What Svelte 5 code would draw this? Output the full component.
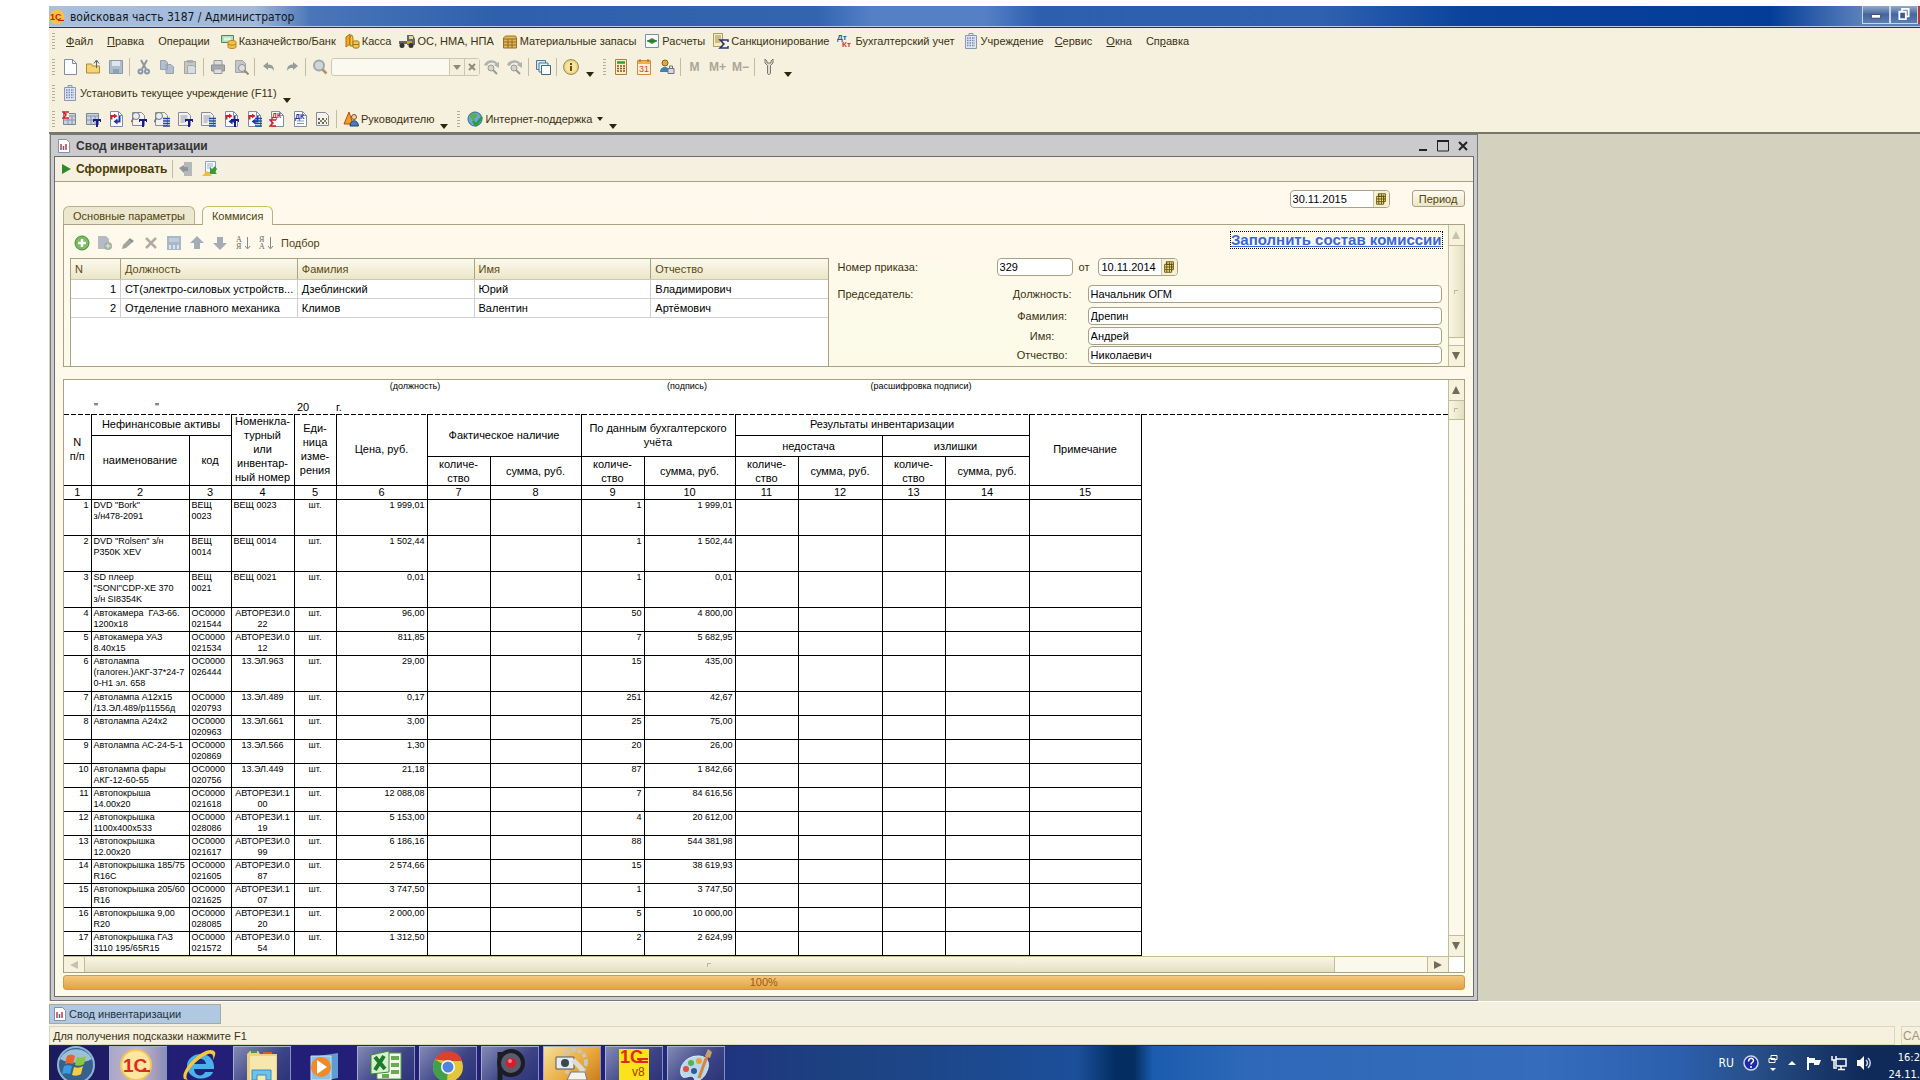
<script>
  const page = '<path d="M2.500 .5h8l4 4v11h-12z" fill="#fff" stroke="#7d8fa8"/><path d="M10.500 .5v4h4" fill="none" stroke="#7d8fa8"/>';
  const grayPage = '<path d="M1.500 1.500h9l3 3v10h-12z" fill="#f4f2ec" stroke="#8a8a92"/>';
  const lines = '<path d="M3.500 5h7M3.500 7h7M3.500 9h7M3.500 11h4" stroke="#9a9aa8"/>';
  const blueT = '<path d="M8 8h8v3h-1v-1h-2v6h-2v-6H9v1H8z" fill="#1a1a8c"/>';
  const blueList = '<path d="M9 7.500h7M9 10h7M9 12.500h7M9 15h7" stroke="#1c4aa8" stroke-width="1.500"/>';
  const sheet = '<path d="M1.500 2.500h12v11h-12z" fill="#c9d4e0" stroke="#7b8794"/><path d="M2 5h11M6 5v8M10 5v8M2 9h11" stroke="#8494a8"/>';
  const swirl = '<path d="M3.500 8.500V5H7" fill="none" stroke="#d02030" stroke-width="2"/><path d="M6 2.500L9.500 5 6 7.500z" fill="#d02030"/><path d="M11.500 5v5.500H9" fill="none" stroke="#2030b0" stroke-width="2"/><path d="M9.500 7.500v6L5.500 10.500z" fill="#2030b0"/>';
  const lens = '<circle cx="5" cy="5" r="3.500" fill="#e8eef2" stroke="#777"/><path d="M2.500 7.500L0 11" stroke="#777" stroke-width="1.500"/>';

  const icons = {
    new: page,
    open: '<path d="M1.500 5h5l1 2h7v7h-13z" fill="#f4d478" stroke="#b08a2c"/><path d="M11.500 9V2M9 4.500L11.500 1 14 4.500" fill="none" stroke="#4a6a7a"/>',
    save: '<path d="M1.500 1.500h13v13h-13z" fill="#aebdcb" stroke="#8a9aac"/><path d="M4 2h8v5H4z" fill="#dfe5ea"/><path d="M5 10h6v4H5z" fill="#8fa0b4"/>',
    cut: '<path d="M5 1l5 9M11 1L6 10" stroke="#8d979f" stroke-width="2"/><circle cx="4.500" cy="12.500" r="2" fill="none" stroke="#8798ac" stroke-width="2"/><circle cx="11" cy="12.500" r="2" fill="none" stroke="#8798ac" stroke-width="2"/>',
    copy: '<path d="M1.500 1.500h5l2 2v7h-7zM7 5.500h5l2.500 2.500v6.500H7z" fill="#b4bfce" stroke="#95a2b4"/>',
    paste: '<path d="M2.500 2.500h11v12h-11z" fill="#c9c7bf" stroke="#a5a49c"/><path d="M5 1h6v3H5z" fill="#a9adb2"/><path d="M5.500 6.500h6l2 2v6h-8z" fill="#d8dde2" stroke="#a0a8b2"/>',
    print: '<path d="M4 1.500h8v5H4z" fill="#dcdcdc" stroke="#999"/><path d="M1.500 6h13v6h-13z" fill="#a6a9ad" stroke="#8c8f94"/><path d="M4 10h8v4.500H4z" fill="#ddd" stroke="#999"/>',
    preview: '<path d="M2.500 1.500h7l3 3v9h-10z" fill="#c4c6ca" stroke="#a2a5aa"/><circle cx="9" cy="9" r="3.500" fill="#dde1e4" stroke="#8b9096"/><path d="M11.500 11.500l4 4" stroke="#9a8c6a" stroke-width="2"/>',
    undo: '<path d="M2 7l5-4v2.500c4 0 6 2 6 6.500-1-2.500-3-3-6-3V11z" fill="#949e97"/>',
    redo: '<path d="M14 7L9 3v2.500c-4 0-6 2-6 6.500 1-2.500 3-3 6-3V11z" fill="#949e97"/>',
    search: '<circle cx="7" cy="6.500" r="5" fill="#ccd7dc" stroke="#a3a7a8" stroke-width="2"/><path d="M10.500 10.500l4 4" stroke="#b4916c" stroke-width="2.500"/>',
    findNext: '<path d="M0 6C2 0 11 0 13 4l2-1v6l-5-3 1.500-1C9 3 4 3 3 7z" fill="#aeb2b0"/><circle cx="7" cy="9" r="3" fill="#d4d4ce" stroke="#999"/><path d="M9 11l4 4" stroke="#999" stroke-width="2"/>',
    windows: '<path d="M1.500 1.500h9v9h-9z" fill="#d6e6ee" stroke="#4d7a94"/><path d="M4 4h9v9H4z" fill="#e8f2f6" stroke="#4d7a94"/><path d="M6.500 6.500h9v9h-9z" fill="#fff" stroke="#3c6a88"/>',
    info: '<circle cx="8" cy="8" r="7.500" fill="#ecd27c" stroke="#9a8a60"/><circle cx="8" cy="8" r="5.500" fill="#f6e69a"/><path d="M8 7v5M8 4v2" stroke="#5a5020" stroke-width="2"/>',
    calc: '<path d="M2.500 .5h11v15h-11z" fill="#fff0c0" stroke="#ad7c3c"/><path d="M4 3.500h8" stroke="#2e9a4c" stroke-width="2.500"/><path d="M4 7h8M4 9.500h8M4 12h8" stroke="#8a4a2c" stroke-width="1.500" stroke-dasharray="2 1"/>',
    calendar: '<path d="M1.500 1.500h13v14h-13z" fill="#fff0d8" stroke="#cf8b3c"/><path d="M2 2h12v3H2z" fill="#f2b048"/><path d="M4 0v3M12 0v3" stroke="#996020"/><text x="3" y="13" font-size="9" fill="#e03c18" font-family="Liberation Sans">31</text>',
    userLock: '<circle cx="6" cy="4" r="3" fill="#e2a83c" stroke="#8a5a20"/><path d="M1 13c0-6 9-7 10 0z" fill="#3c80b8"/><path d="M9 9.500h6v5H9z" fill="#d6dae0" stroke="#6a7380"/><path d="M10.500 9V7h3v2" fill="none" stroke="#6a7380"/>',
    wrench: '<path d="M4 0v4l2.500 2.500V14c0 2 3 2 3 0V6.500L12 4V0l-2 2v2H6V2z" fill="#deded8" stroke="#787868"/>',
    building: '<path d="M2.500 2.500h11v13h-11zM6 .5h4v2H6z" fill="#dfe7f4" stroke="#8a96b4"/><path d="M4 5h8M4 7.500h8M4 10h8M4 12.500h8" stroke="#7686b0" stroke-width="1.500" stroke-dasharray="1.500 1"/>',
    bank: '<path d="M.5 2.500h12v7H.5z" fill="#b6dcbc" stroke="#4a8a5c"/><path d="M3 4.500h7v3H3z" fill="#e0f2e0"/><path d="M7 9c0-2 8-2 8 0v5c0 2-8 2-8 0z" fill="#f2c240" stroke="#b58620"/><path d="M7 11c2 1.500 6 1.500 8 0" fill="none" stroke="#b58620"/>',
    cash: '<path d="M2 4l4-3v10l-4 3z" fill="#f2a820" stroke="#b86c10"/><path d="M7 2c2 0 2 3 2 5v6H6V5z" fill="#f4c840" stroke="#a87414"/><path d="M9 9c0-1.500 6-1.500 6 0v5c0 1.500-6 1.500-6 0z" fill="#f0c850" stroke="#a87414"/><path d="M9 11.500h6" stroke="#a87414"/>',
    truck: '<path d="M0 8h8v3H0zM8 2h6l2 4v6H8z" fill="#5e6a6c"/><path d="M10 3h4v3h-4z" fill="#e8d890"/><path d="M8 8h5v3H8z" fill="#d89a20"/><circle cx="3" cy="12.500" r="2.500" fill="#333"/><circle cx="12" cy="12.500" r="2.500" fill="#333"/>',
    box: '<path d="M1.500 5l2-2h10l1 2v10h-13z" fill="#e8b850" stroke="#96702c"/><path d="M2 6h12M2 9h12M2 12h12M6 6v9M10 6v9" stroke="#8c6c2c"/>',
    calcs: '<path d="M1.500 1.500h13v13h-13z" fill="#f6fafc" stroke="#7890a8"/><path d="M3 8l5-3 5 3-5 3z" fill="#3c8c3c"/><path d="M3 8h10" stroke="#24682c"/>',
    sanction: '<path d="M.5 .5h9v13h-9z" fill="#f8eebc" stroke="#a89c60"/><path d="M2 3h6M2 5h6M2 7h5M2 9h5" stroke="#a08c50"/><path d="M15 9V7H7l4 4-4 4h8v-2" fill="none" stroke="#23337a" stroke-width="1.500"/>',
    dtkt: '<text x="0" y="7" font-size="8" font-weight="bold" fill="#2060a0" font-family="Liberation Sans">Дт</text><text x="5" y="14" font-size="8" font-weight="bold" fill="#d03828" font-family="Liberation Sans">Кт</text>',
    r1: sheet + '<path d="M7 .5v7H0z" fill="#f6f0df"/><path d="M7 1H1l3 3-3 3h6" fill="none" stroke="#d02030" stroke-width="1.500"/>',
    r2: sheet + blueT,
    r3: page + swirl,
    r4: grayPage + lens + blueT,
    r5: grayPage + lens + blueList,
    r6: grayPage + lines + blueT,
    r7: grayPage + lines + blueList,
    r8: page + swirl + blueT,
    r9: page + swirl + blueList,
    r10: page + '<text x="3" y="7" font-size="7" font-weight="bold" fill="#c02030" font-family="Liberation Sans">ДК</text><path d="M7 9H1l3 3-3 3h6" fill="none" stroke="#d02030" stroke-width="1.500"/>',
    r11: page + '<text x="3" y="8" font-size="7" font-weight="bold" fill="#2030a0" font-family="Liberation Sans">ДК</text><path d="M5 10h7M5 12.500h7" stroke="#8a96a8"/>',
    r12: grayPage + '<path d="M3 8h9M3 12h9" stroke="#666" stroke-width="2" stroke-dasharray="2 2"/><path d="M5 10h8" stroke="#8a8048" stroke-width="2" stroke-dasharray="2 2"/>',
    manager: '<path d="M1 13L6 1l4 12z" fill="#f0a020" stroke="#c04818"/><circle cx="11" cy="6" r="2.500" fill="#f0d0a0" stroke="#805020"/><path d="M7 15c0-7 8-7 8.500 0z" fill="#4a7ab8" stroke="#24406c"/>',
    globe: '<circle cx="8" cy="8" r="7" fill="#68a8d8" stroke="#35688c"/><path d="M3 4c3-3 6-2 7 0s-3 3-3 5-4-1-4-5z" fill="#58b050"/><path d="M6 10l3 4 6-8" fill="none" stroke="#2c9c30" stroke-width="2.500"/>',
    report: '<path d="M2.500 1.500h8l3 3v10h-11z" fill="#fff" stroke="#7f93ad"/><path d="M5 12V6" stroke="#c23b3b" stroke-width="1.500"/><path d="M7.500 12V8" stroke="#3d6bb0" stroke-width="1.500"/><path d="M10 12V6" stroke="#c23b3b" stroke-width="1.500"/>',
    restore: '<path d="M5 1h8v14H5z" fill="#b5b8ba"/><path d="M0 7l5-3v2h4v4H5v2z" fill="#8f9698"/>',
    loadSet: '<path d="M3.500 .5h10v11h-10z" fill="#f6f8fc" stroke="#8ba0c4"/><path d="M5 3h6M5 5h6M5 7h4" stroke="#9ab0d4"/><path d="M15 13H8V6l2 2 3-3 2 3-2 3z" fill="#3b9a35"/><path d="M0 15l5-5 5 5z" fill="#f2bc34"/>',
    add: '<circle cx="8" cy="8" r="7" fill="#7cbc60" stroke="#4c8a44"/><path d="M8 4v8M4 8h8" stroke="#fff" stroke-width="2.500"/>',
    addCopy: '<path d="M1 1h8l3 3v10H1z" fill="#b4bbc4"/><circle cx="11" cy="11" r="4" fill="#a3b0a0"/><path d="M11 8.500v5M8.500 11h5" stroke="#e8ece8"/>',
    edit: '<path d="M2 14l1-4 7-7 4 3-8 7z" fill="#9ea59c"/><path d="M9 4l4 3" stroke="#78807a"/>',
    remove: '<path d="M3 3l10 10M13 3L3 13" stroke="#b3aaa4" stroke-width="2.500"/>',
    saveRow: '<path d="M1 1h14v14H1z" fill="#a8b8ca"/><path d="M3 3h10v4H3z" fill="#bfcdda"/><path d="M3 10h2v4H3zM7 10h2v4H7zM11 10h2v4h-2z" fill="#dce4ec"/>',
    up: '<path d="M8 1l7 7h-4v6H5V8H1z" fill="#a4adb6"/>',
    downRow: '<path d="M8 15l7-7h-4V2H5v6H1z" fill="#a4adb6"/>',
    sortAZ: '<text x="1" y="7" font-size="8" fill="#666" font-family="Liberation Serif">А</text><text x="1" y="14" font-size="8" fill="#666" font-family="Liberation Serif">Я</text><path d="M12.500 2v11M10 11l2.500 3 2.500-3" fill="none" stroke="#888"/>',
    sortZA: '<text x="1" y="7" font-size="8" fill="#666" font-family="Liberation Serif">Я</text><text x="1" y="14" font-size="8" fill="#666" font-family="Liberation Serif">А</text><path d="M12.500 2v11M10 11l2.500 3 2.500-3" fill="none" stroke="#888"/>',
    pick: '<path d="M5 2h8v9H5z" fill="#f6e48c" stroke="#5c4e08"/><path d="M3 5h8v9H3z" fill="#f6e48c" stroke="#5c4e08"/><path d="M3 8h10M3 11h8M5 5h8M5.500 2v12M8.500 2v12M11 3v9" stroke="#5c4e08"/>',
  };

  const menu = [
    { text: "Файл", key: 0 },
    { text: "Правка", key: 0 },
    { text: "Операции" },
    { text: "Казначейство/Банк", icon: "bank" },
    { text: "Касса", icon: "cash" },
    { text: "ОС, НМА, НПА", icon: "truck" },
    { text: "Материальные запасы", icon: "box" },
    { text: "Расчеты", icon: "calcs" },
    { text: "Санкционирование", icon: "sanction" },
    { text: "Бухгалтерский учет", icon: "dtkt" },
    { text: "Учреждение", icon: "building" },
    { text: "Сервис", key: 0 },
    { text: "Окна", key: 0 },
    { text: "Справка", key: 2 },
  ];

  const fileTools = ["new", "open", "save", "|", "cut", "copy", "paste", "|", "print", "preview", "|", "undo", "redo", "|", "search"];
  const reports = ["r1", "r2", "r3", "r4", "r5", "r6", "r7", "r8", "r9", "r10", "r11", "r12"];
  const rowTools = ["add", "addCopy", "edit", "remove", "saveRow", "up", "downRow", "sortAZ", "sortZA"];

  const members = [
    [1, "СТ(электро-силовых устройств...", "Дзеблинский", "Юрий", "Владимирович"],
    [2, "Отделение главного механика", "Климов", "Валентин", "Артёмович"],
  ];

  const chairman = [
    { id: "post", label: "Должность:", value: "Начальник ОГМ" },
    { id: "surname", label: "Фамилия:", value: "Дрепин" },
    { id: "name", label: "Имя:", value: "Андрей" },
    { id: "patronymic", label: "Отчество:", value: "Николаевич" },
  ];

  const colWidths = [27, 98, 42, 63, 42, 91, 63, 91, 63, 91, 63, 84, 63, 84, 112];

  // name, code, number, price, quantity, sum
  const rows = [
    ['DVD "Bork"\nз/н478-2091', "ВЕЩ\n0023", "ВЕЩ 0023", "1 999,01", "1", "1 999,01"],
    ['DVD "Rolsen" з/н\nP350K XEV', "ВЕЩ\n0014", "ВЕЩ 0014", "1 502,44", "1", "1 502,44"],
    ['SD плеер\n"SONI"CDP-XE 370\nз/н SI8354K', "ВЕЩ\n0021", "ВЕЩ 0021", "0,01", "1", "0,01"],
    ["Автокамера  ГАЗ-66.\n1200х18", "ОС0000\n021544", "АВТОРЕЗИ.0\n22", "96,00", "50", "4 800,00"],
    ["Автокамера УАЗ\n8.40х15", "ОС0000\n021534", "АВТОРЕЗИ.0\n12", "811,85", "7", "5 682,95"],
    ["Автолампа\n(галоген.)АКГ-37*24-7\n0-Н1 эл. 658", "ОС0000\n026444", "13.ЭЛ.963", "29,00", "15", "435,00"],
    ["Автолампа А12х15\n/13.ЭЛ.489/р11556д", "ОС0000\n020793", "13.ЭЛ.489", "0,17", "251", "42,67"],
    ["Автолампа А24х2", "ОС0000\n020963", "13.ЭЛ.661", "3,00", "25", "75,00"],
    ["Автолампа АС-24-5-1", "ОС0000\n020869", "13.ЭЛ.566", "1,30", "20", "26,00"],
    ["Автолампа фары\nАКГ-12-60-55", "ОС0000\n020756", "13.ЭЛ.449", "21,18", "87", "1 842,66"],
    ["Автопокрыша\n14.00х20", "ОС0000\n021618", "АВТОРЕЗИ.1\n00", "12 088,08", "7", "84 616,56"],
    ["Автопокрышка\n1100х400х533", "ОС0000\n028086", "АВТОРЕЗИ.1\n19", "5 153,00", "4", "20 612,00"],
    ["Автопокрышка\n12.00х20", "ОС0000\n021617", "АВТОРЕЗИ.0\n99", "6 186,16", "88", "544 381,98"],
    ["Автопокрышка 185/75\nR16C", "ОС0000\n021605", "АВТОРЕЗИ.0\n87", "2 574,66", "15", "38 619,93"],
    ["Автопокрышка 205/60\nR16", "ОС0000\n021625", "АВТОРЕЗИ.1\n07", "3 747,50", "1", "3 747,50"],
    ["Автопокрышка 9,00\nR20", "ОС0000\n028085", "АВТОРЕЗИ.1\n20", "2 000,00", "5", "10 000,00"],
    ["Автопокрышка ГАЗ\n3110 195/65R15", "ОС0000\n021572", "АВТОРЕЗИ.0\n54", "1 312,50", "2", "2 624,99"],
  ];

  const isTall = (i) => i < 3 || i === 5;

  // taskbar pictures, 58x34, the lower edge runs off the screen
  const apps = [
    { name: "1С", kind: "active", art: '<circle cx="27" cy="19" r="15" fill="#fbe7a0"/><circle cx="27" cy="19" r="15" fill="none" stroke="#f4c65a" stroke-width="2"/><text x="14" y="26" font-size="19" font-weight="bold" fill="#e02a1c" font-family="Liberation Sans">1С</text><path d="M30 25h11" stroke="#e02a1c" stroke-width="2"/><path d="M53 0v34" stroke="#8892c4"/><path d="M56 0v34" stroke="#8892c4"/>' },
    { name: "Internet Explorer", kind: "plain", art: '<path d="M42 26c-3 9-24 10-26-5C15 6 41 2 43 20v3H23c1 8 9 8 11 3z" fill="#49b2ec"/><path d="M23 18h12c-1-7-11-7-12 0z" fill="#1d2a80"/><path d="M13 33C8 25 33-1 43 5c3 2 0 7-1 9 1-5-1-8-7-5C23 15 11 30 17 34z" fill="#f6c63c"/>' },
    { name: "Проводник", kind: "run", art: '<path d="M14 8l3-3h8l2 3h17v28H14z" fill="#ecd185"/><path d="M17 10h26v24H17z" fill="#f7e7ac"/><path d="M18 6h6" stroke="#3aa048" stroke-width="2"/><path d="M30 7h9" stroke="#d85a34" stroke-width="2"/><path d="M19 34V24h19v10h-5v-5h-9v5z" fill="#6cc2e8" stroke="#3a8cc0"/>' },
    { name: "Проигрыватель", kind: "plain", art: '<path d="M23 10l20-3v25l-20 4z" fill="#5f9cd0"/><path d="M16 10h20v24H16z" fill="#8ec0e8" stroke="#cce2f4"/><circle cx="26" cy="21" r="10" fill="#ef8a24"/><path d="M22 14l10 7-10 7z" fill="#fff"/>' },
    { name: "Excel", kind: "run", art: '<path d="M20 7h24v26H20z" fill="#f2f8ee" stroke="#5c9a48"/><path d="M34 10h8v4h-8zM34 17h8v4h-8zM34 24h8v4h-8zM25 28h7v4h-7z" fill="#6aab50"/><path d="M14 9l18-4v21l-18 2z" fill="#d8efcc" stroke="#3d8a38"/><path d="M18 11l10 12M27 10l-9 14" stroke="#1f7a2c" stroke-width="4"/>' },
    { name: "Chrome", kind: "run", art: '<circle cx="29" cy="21" r="15" fill="#e4c63a"/><path d="M29 21l-13-7.500A15 15 0 0 0 28 36z" fill="#3fa04c"/><path d="M16 13.500A15 15 0 0 1 43.500 15H29z" fill="#d9422f"/><circle cx="29" cy="21" r="7" fill="#fff"/><circle cx="29" cy="21" r="5.500" fill="#4a86e0"/>' },
    { name: "Запись", kind: "run", art: '<path d="M19 34V6" stroke="#1c1c24" stroke-width="5"/><circle cx="30" cy="17" r="12" fill="#5a5c6e" stroke="#1c1c24" stroke-width="4"/><circle cx="30" cy="17" r="5" fill="#d81c2c"/><circle cx="29" cy="15" r="2" fill="#ff8080"/>' },
    { name: "Снимки", kind: "hot", art: '<circle cx="31" cy="16" r="12" fill="none" stroke="#c8c8c0" stroke-width="4" stroke-dasharray="4 2"/><path d="M13 11h18v12H13z" fill="#e9ecee" stroke="#555"/><circle cx="22" cy="17" r="4" fill="#3c4654"/><path d="M30 14l8 8 3 7" fill="none" stroke="#dcdcd4" stroke-width="5"/><path d="M24 34l4-8h14l2 8z" fill="#f4f4ee" stroke="#777"/>' },
    { name: "1С v8", kind: "run", art: '<path d="M14 3h30v31H14z" fill="#fbe31c"/><text x="15" y="17" font-size="18" font-weight="bold" fill="#dd2a1a" font-family="Liberation Sans">1С</text><path d="M32 13h11M32 16h11" stroke="#dd2a1a" stroke-width="2"/><text x="27" y="30" font-size="12" fill="#a03a10" font-family="Liberation Sans">v8</text>' },
    { name: "Paint", kind: "run", art: '<path d="M14 28c-2-9 6-18 17-18 12 0 12 10 8 17-3 7-9 8-11 7-2-5-5-4-8-3-4 1-5 0-6-3z" fill="#b8d8ec" stroke="#dff0fa"/><circle cx="24" cy="17" r="3" fill="#58b050"/><circle cx="32" cy="15" r="3" fill="#efa033"/><circle cx="19" cy="23" r="3" fill="#e0503c"/><circle cx="27" cy="25" r="3" fill="#34589c"/><path d="M32 32l8-22" stroke="#d8843c" stroke-width="3"/><path d="M38 10l3-7 4 3-2 6z" fill="#c8a070"/>' },
  ];
</script>

{#snippet icon(name)}
  <svg class="ico" viewBox="0 0 16 16" aria-hidden="true">{@html icons[name]}</svg>
{/snippet}

{#snippet tool(name)}
  {#if name === "|"}
    <span class="sep"></span>
  {:else}
    <button class="tool" aria-label={name}>{@render icon(name)}</button>
  {/if}
{/snippet}

<div class="screen">
  <header class="titlebar">
    <svg class="ico" viewBox="0 0 16 16" aria-hidden="true">
      <circle cx="8" cy="8" r="7.500" fill="#f7c340" />
      <text x="1" y="11" font-size="9" font-weight="bold" fill="#c81e10" font-family="Liberation Sans">1С</text>
      <path d="M9 11.500h6" stroke="#c81e10" />
    </svg>
    <h1>войсковая часть 3187 / Администратор</h1>
    <div class="winbuttons">
      <button aria-label="Свернуть">
        <svg viewBox="0 0 28 18"><path d="M9 9h10v4H9z" fill="#fff" stroke="#445" /></svg>
      </button>
      <button aria-label="Восстановить">
        <svg viewBox="0 0 28 18"><path d="M12 3h7v8h-7z" fill="none" stroke="#fff" stroke-width="2" /><path d="M9 6h7v8H9z" fill="#3c5a8c" stroke="#fff" stroke-width="2" /></svg>
      </button>
      <button class="close" aria-label="Закрыть"></button>
    </div>
  </header>

  <div class="bars">
    <nav class="bar menu">
      <span class="grip"></span>
      {#each menu as item}
        <button class:plain={!item.icon}>
          {#if item.icon}{@render icon(item.icon)}{/if}
          {#if item.key !== undefined}
            <span>{item.text.slice(0, item.key)}<u>{item.text[item.key]}</u>{item.text.slice(item.key + 1)}</span>
          {:else}
            <span>{item.text}</span>
          {/if}
        </button>
      {/each}
    </nav>

    <div class="bar">
      <span class="grip"></span>
      {#each fileTools as name}{@render tool(name)}{/each}
      <div class="combo">
        <input type="text" aria-label="Поиск" />
        <button aria-label="Список"><svg viewBox="0 0 14 16"><path d="M3 6h8l-4 5z" fill="#8d8a78" /></svg></button>
        <button aria-label="Очистить"><svg viewBox="0 0 14 16"><path d="M4 5l6 6M10 5l-6 6" stroke="#8d8a78" stroke-width="2" /></svg></button>
      </div>
      {@render tool("findNext")}
      {@render tool("findNext")}
      {@render tool("|")}
      {@render tool("windows")}
      {@render tool("|")}
      {@render tool("info")}
      <span class="more"></span>
      <span class="grip"></span>
      {@render tool("calc")}
      {@render tool("calendar")}
      {@render tool("userLock")}
      {@render tool("|")}
      <button class="tool mem">M</button>
      <button class="tool mem">M+</button>
      <button class="tool mem">M−</button>
      {@render tool("|")}
      {@render tool("wrench")}
      <span class="more"></span>
    </div>

    <div class="bar">
      <span class="grip"></span>
      <button class="wide">{@render icon("building")}<span>Установить текущее учреждение (F11)</span></button>
      <span class="more"></span>
    </div>

    <div class="bar">
      <span class="grip"></span>
      {#each reports as name}{@render tool(name)}{/each}
      {@render tool("|")}
      <button class="wide">{@render icon("manager")}<span>Руководителю</span></button>
      <span class="more"></span>
      <span class="grip"></span>
      <button class="wide">{@render icon("globe")}<span>Интернет-поддержка</span><i class="caret"></i></button>
      <span class="more"></span>
    </div>
  </div>

  <main class="desk">
    <section class="window">
      <div class="caption">
        {@render icon("report")}
        <h2>Свод инвентаризации</h2>
        <button aria-label="Свернуть"><svg viewBox="0 0 16 16"><path d="M4 12h8" stroke="#222" stroke-width="2" /></svg></button>
        <button aria-label="Развернуть"><svg viewBox="0 0 16 16"><path d="M2.500 3h11v10h-11z" fill="none" stroke="#222" /><path d="M2 3h12" stroke="#222" stroke-width="2" /></svg></button>
        <button aria-label="Закрыть"><svg viewBox="0 0 16 16"><path d="M4 4l8 8M12 4l-8 8" stroke="#222" stroke-width="2" /></svg></button>
      </div>

      <div class="client">
        <div class="actions">
          <button class="form"><svg viewBox="0 0 10 10"><path d="M1 0l9 5-9 5z" fill="#2f8a2c" /></svg><b>Сформировать</b></button>
          <span class="sep"></span>
          {@render tool("restore")}
          {@render tool("loadSet")}
        </div>

        <div class="content">
          <div class="period">
            <div class="field date">
              <input type="text" value="30.11.2015" aria-label="Дата" />
              <button aria-label="Выбрать дату">{@render icon("pick")}</button>
            </div>
            <button class="push">Период</button>
          </div>

          <div class="tabs" role="tablist">
            <button role="tab" aria-selected="false">Основные параметры</button>
            <button role="tab" aria-selected="true" class="current">Коммисия</button>
          </div>

          <div class="panel">
            <div class="panelbody">
              <div class="paneltop">
                {#each rowTools as name}{@render tool(name)}{/each}
                <button class="textbtn">Подбор</button>
                <a href="#fill">Заполнить состав комиссии</a>
              </div>
              <div class="split">
                <div class="members">
                  <table>
                    <thead>
                      <tr><th class="num">N</th><th>Должность</th><th>Фамилия</th><th>Имя</th><th>Отчество</th></tr>
                    </thead>
                    <tbody>
                      {#each members as member}
                        <tr>
                          {#each member as value}<td>{value}</td>{/each}
                        </tr>
                      {/each}
                    </tbody>
                  </table>
                </div>

                <form class="order">
                  <label for="order-no">Номер приказа:</label>
                  <div class="orderline">
                    <input id="order-no" class="field" type="text" value="329" />
                    <label for="order-date">от</label>
                    <div class="field date short">
                      <input id="order-date" type="text" value="10.11.2014" />
                      <button type="button" aria-label="Выбрать дату">{@render icon("pick")}</button>
                    </div>
                  </div>
                  <span class="chair">Председатель:</span>
                  {#each chairman as item}
                    <label class="sub" for={item.id}>{item.label}</label>
                    <input class="field" id={item.id} type="text" value={item.value} />
                  {/each}
                </form>
              </div>
            </div>
            <div class="vscroll">
              <button aria-label="Вверх"><i class="tri up dim"></i></button>
              <div class="thumb long"></div>
              <div class="track"></div>
              <button aria-label="Вниз"><i class="tri down"></i></button>
            </div>
          </div>

          <div class="sheet">
            <div class="paper">
              <div class="signs">
                <span>(должность)</span>
                <span>(подпись)</span>
                <span>(расшифровка подписи)</span>
              </div>
              <div class="dateline">
                <span>"</span><span>"</span><span>20</span><span>г.</span>
              </div>
              <div class="pagebreak"></div>
              <table class="report">
                <colgroup>
                  {#each colWidths as width}<col style="width: {width}px" />{/each}
                </colgroup>
                <thead>
                  <tr class="h1">
                    <th rowspan="3" class="first">N<br />п/п</th>
                    <th colspan="2">Нефинансовые активы</th>
                    <th rowspan="3">Номенкла-<br />турный<br />или<br />инвентар-<br />ный номер</th>
                    <th rowspan="3">Еди-<br />ница<br />изме-<br />рения</th>
                    <th rowspan="3">Цена, руб.</th>
                    <th colspan="2" rowspan="2">Фактическое наличие</th>
                    <th colspan="2" rowspan="2">По данным бухгалтерского<br />учёта</th>
                    <th colspan="4">Результаты инвентаризации</th>
                    <th rowspan="3">Примечание</th>
                  </tr>
                  <tr class="h1">
                    <th rowspan="2">наименование</th>
                    <th rowspan="2">код</th>
                    <th colspan="2">недостача</th>
                    <th colspan="2">излишки</th>
                  </tr>
                  <tr class="h2">
                    {#each Array(4) as _}
                      <th>количе-<br />ство</th>
                      <th>сумма, руб.</th>
                    {/each}
                  </tr>
                  <tr class="h3">
                    {#each colWidths as _, i}<th class:first={i === 0}>{i + 1}</th>{/each}
                  </tr>
                </thead>
                <tbody>
                  {#each rows as [name, code, number, price, quantity, sum], i}
                    <tr class:tall={isTall(i)}>
                      <td class="r first">{i + 1}</td>
                      <td>{name}</td>
                      <td>{code}</td>
                      <td class:c={i > 2}>{number}</td>
                      <td class="c">шт.</td>
                      <td class="r">{price}</td>
                      <td></td>
                      <td></td>
                      <td class="r">{quantity}</td>
                      <td class="r">{sum}</td>
                      <td></td>
                      <td></td>
                      <td></td>
                      <td></td>
                      <td></td>
                    </tr>
                  {/each}
                </tbody>
              </table>
            </div>
            <div class="vscroll">
              <button aria-label="Вверх"><i class="tri up"></i></button>
              <div class="thumb"></div>
              <div class="track"></div>
              <button aria-label="Вниз"><i class="tri down"></i></button>
            </div>
            <div class="hscroll">
              <button aria-label="Влево"><i class="tri left dim"></i></button>
              <div class="thumb"></div>
              <div class="track"></div>
              <button aria-label="Вправо"><i class="tri right"></i></button>
            </div>
            <div class="corner"></div>
          </div>

          <div class="progress" role="progressbar" aria-label="Формирование" aria-valuenow="100">100%</div>
        </div>
      </div>
    </section>
  </main>

  <div class="windows">
    <button>{@render icon("report")}<span>Свод инвентаризации</span></button>
  </div>
  <div class="status">
    <span class="hint">Для получения подсказки нажмите F1</span>
    <span class="cap">CAP</span>
  </div>

  <footer class="taskbar">
    <button class="start" aria-label="Пуск">
      <svg viewBox="0 0 58 34">
        <circle cx="27" cy="19" r="18" fill="#35618c" stroke="#8db6d4" stroke-width="2" />
        <path d="M11 13a18 18 0 0 1 32 0c-10 5-22 5-32 0z" fill="#9cc0d8" />
        <path d="M18 10c3-2 6-1 8 0l-2 8c-3-1-5-1-8 0z" fill="#e8642c" />
        <path d="M28 11c3 1 6 1 9-1l-2 8c-3 2-6 2-9 1z" fill="#8cc63c" />
        <path d="M15 20c3-1 6-1 8 0l-2 8c-3-1-5-1-8 0z" fill="#3c9ce0" />
        <path d="M25 21c3 1 6 1 9-1l-2 8c-3 2-6 2-9 1z" fill="#f8cc3c" />
      </svg>
    </button>
    {#each apps as app}
      <button class={app.kind} aria-label={app.name}><svg viewBox="0 0 58 34">{@html app.art}</svg></button>
    {/each}
    <div class="tray">
      <span>RU</span>
      <svg viewBox="0 0 16 16"><circle cx="8" cy="8" r="7" fill="#1b2ba8" stroke="#cdd6f0" stroke-width="1.500" /><path d="M5.500 6.500c0-4 5-4 5-1 0 2-2.500 2-2.500 4M8 11v2" fill="none" stroke="#fff" stroke-width="1.500" /></svg>
      <svg class="langbar" viewBox="0 0 10 20"><path d="M3 2.500h6v4H3zM1 5.500h6v4H1z" fill="#24426c" stroke="#fff" /><path d="M2 15h6l-3 3z" fill="#fff" /></svg>
      <svg class="small" viewBox="0 0 10 16"><path d="M1 10l4-4 4 4z" fill="#fff" /></svg>
      <svg viewBox="0 0 16 16"><path d="M2 2v13" stroke="#fff" stroke-width="2" /><path d="M3 3h6v2h6l-2 5H8V8H3z" fill="#fff" /></svg>
      <svg viewBox="0 0 16 16"><path d="M5 4h10v7H5zM10 11v3M7 14.500h7M1 1v4h4V1M3 5v8h3" fill="none" stroke="#fff" stroke-width="1.500" /></svg>
      <svg viewBox="0 0 16 16"><path d="M1 5h3l4-4v14l-4-4H1z" fill="#fff" /><path d="M10 5c2 2 2 4 0 6M12 3c3 3 3 7 0 10" fill="none" stroke="#cfd9ea" stroke-width="1.500" /></svg>
      <div class="clock"><span>16:2</span><span>24.11.</span></div>
    </div>
  </footer>
</div>

<style>
  :global(body) {
    background: #fff;
  }
  button,
  input {
    font: inherit;
    color: inherit;
    margin: 0;
    padding: 0;
    border: 0;
    background: none;
    box-sizing: border-box;
  }
  svg {
    display: block;
    flex: none;
  }
  .screen {
    --cream: #f6f0df;
    --line: #a8a184;
    box-sizing: border-box;
    height: 100vh;
    padding: 6px 0 0 49px;
    display: flex;
    flex-direction: column;
    overflow: hidden;
    font: 11px/14px "Liberation Sans", Arial, sans-serif;
    color: #3a3210;
  }
  .ico {
    width: 16px;
    height: 16px;
  }

  .titlebar {
    height: 22px;
    flex: none;
    box-sizing: border-box;
    display: flex;
    align-items: center;
    gap: 5px;
    border-bottom: 1px solid #12386f;
    box-shadow: inset 0 -1px #b8cbe6;
    background: linear-gradient(90deg, #a9bfde 0, #a2b9da 11%, #4a76b8 14%, #2f60ad 24%, #3264b0 41%, #5580c6 44%, #5580c6 50%, #2c5fae 53%, #2e62b0 68%, #0a429c 76%, #043d98 92%, #5c82bc 97%);
  }
  .titlebar h1 {
    flex: 1;
    margin: 0;
    font: 12px/16px "DejaVu Sans Condensed", "DejaVu Sans", sans-serif;
    color: #101820;
  }
  .winbuttons {
    align-self: flex-start;
    display: flex;
  }
  .winbuttons button {
    width: 28px;
    height: 18px;
    border: 1px solid #c8d6ea;
    border-top: 0;
    background: linear-gradient(#93a9cb, #44669e 50%, #5f80b4);
  }
  .winbuttons svg {
    width: 26px;
    height: 17px;
  }
  .winbuttons .close {
    width: 2px;
    border: 0;
    background: #c0392b;
  }

  .bars {
    flex: none;
    background: var(--cream);
    border-bottom: 2px solid #77766e;
  }
  .bar {
    height: 26px;
    display: flex;
    align-items: center;
    padding-left: 3px;
  }
  .grip {
    width: 3px;
    height: 17px;
    margin-right: 3px;
    background: repeating-linear-gradient(#b5ae94 0 1px, transparent 1px 3px);
  }
  .menu {
    gap: 8px;
  }
  .menu .grip {
    margin-right: 0;
  }
  .menu button {
    display: flex;
    align-items: center;
    gap: 2px;
    white-space: nowrap;
  }
  .menu .plain {
    padding: 0 3px;
  }
  .tool {
    width: 23px;
    height: 22px;
    display: flex;
    align-items: center;
    justify-content: center;
  }
  .mem {
    font-size: 12px;
    font-weight: bold;
    color: #aaa799;
  }
  .sep {
    width: 1px;
    height: 18px;
    margin: 0 2px;
    background: #c3bca2;
  }
  .more {
    align-self: flex-end;
    width: 0;
    margin: 0 9px 3px 4px;
    border: 4px solid transparent;
    border-top: 5px solid #2c2608;
    border-bottom: 0;
  }
  .wide {
    display: flex;
    align-items: center;
    gap: 2px;
    padding: 0 2px 0 4px;
    white-space: nowrap;
  }
  .caret {
    margin-left: 2px;
    border: 3px solid transparent;
    border-top: 4px solid #2c2608;
    border-bottom: 0;
  }
  .combo {
    display: flex;
    width: 149px;
    height: 18px;
    box-sizing: border-box;
    border: 1px solid #cdc7ad;
    border-radius: 3px;
    background: #fcfaf0;
  }
  .combo input {
    flex: 1;
    min-width: 0;
    padding: 0 3px;
  }
  .combo button {
    width: 15px;
    border-left: 1px solid #cdc7ad;
    background: #f4efdc;
  }

  .desk {
    flex: 1;
    min-height: 0;
    background: #d4d1be;
  }
  .window {
    box-sizing: border-box;
    width: 76.3%;
    height: 100%;
    margin-left: 1px;
    padding: 1px 3px 3px;
    display: flex;
    flex-direction: column;
    border: 1px solid #77777b;
    background: #cbcbcd;
  }
  .caption {
    height: 20px;
    flex: none;
    display: flex;
    align-items: center;
    gap: 4px;
    padding: 0 3px 0 2px;
  }
  .caption h2 {
    flex: 1;
    margin: 0;
    font-size: 12px;
    color: #333;
  }
  .caption button svg {
    width: 16px;
    height: 16px;
  }
  .client {
    flex: 1;
    min-height: 0;
    display: flex;
    flex-direction: column;
    border: 1px solid #6c6c6e;
    background: linear-gradient(#fff8ec, #fcfbe8);
  }
  .actions {
    height: 24px;
    flex: none;
    display: flex;
    align-items: center;
    padding-left: 6px;
    border-bottom: 1px solid var(--line);
    background: #f5f0e0;
  }
  .form {
    display: flex;
    align-items: center;
    gap: 5px;
    padding-right: 3px;
    font-size: 12px;
    color: #4a3c00;
  }
  .form svg {
    width: 10px;
    height: 10px;
  }

  .content {
    flex: 1;
    min-height: 0;
    display: flex;
    flex-direction: column;
    padding: 8px 8px 6px;
  }
  .period {
    display: flex;
    justify-content: flex-end;
    gap: 22px;
    height: 16px;
  }
  .field {
    box-sizing: border-box;
    width: 100%;
    height: 18px;
    padding: 0 2px;
    border: 1px solid var(--line);
    border-radius: 4px;
    background: #fff;
    color: #000;
  }
  .date {
    display: flex;
    width: 100px;
    padding-right: 0;
    overflow: hidden;
  }
  .date input {
    flex: 1;
    min-width: 0;
  }
  .date button {
    width: 16px;
    border-left: 1px solid #cfc89f;
    background: #f6f1d4;
  }
  .date .ico {
    width: 14px;
  }
  .short {
    width: 80px;
  }
  .push {
    width: 53px;
    height: 17px;
    border: 1px solid var(--line);
    border-radius: 3px;
    background: linear-gradient(#fdfbf0, #ece6c8);
    color: #50430c;
  }
  .tabs {
    display: flex;
    align-items: flex-end;
    gap: 7px;
  }
  .tabs button {
    height: 18px;
    padding: 0 9px;
    border: 1px solid #b7b08e;
    border-bottom: 0;
    border-radius: 6px 6px 0 0;
    background: #ece7cf;
    color: #50430c;
    line-height: 16px;
  }
  .tabs .current {
    height: 19px;
    margin-bottom: -1px;
    border-top-color: #cdbf6a;
    background: #fdfaec;
    z-index: 1;
  }

  .panel {
    flex: none;
    display: flex;
    height: 143px;
    box-sizing: border-box;
    border: 1px solid var(--line);
    background: linear-gradient(#fff9ec, #fbfbe8);
  }
  .panelbody {
    flex: 1;
    min-width: 0;
    display: flex;
    flex-direction: column;
    padding: 0 6px;
  }
  .paneltop {
    height: 33px;
    flex: none;
    display: flex;
    align-items: center;
    padding-top: 2px;
    box-sizing: border-box;
  }
  .textbtn {
    margin-left: 4px;
    color: #50430c;
  }
  .paneltop a {
    margin-left: auto;
    align-self: flex-start;
    margin-top: 5px;
    outline: 1px dotted #000;
    font-weight: bold;
    font-size: 15px;
    line-height: 16px;
    color: #3d66d6;
  }
  .split {
    flex: 1;
    min-height: 0;
    display: flex;
    gap: 9px;
  }
  .members {
    flex: 1;
    min-width: 0;
    border: 1px solid var(--line);
    border-bottom: 0;
    background: #fff;
  }
  .members table {
    width: 100%;
    table-layout: fixed;
    border-collapse: collapse;
    color: #000;
  }
  .members th {
    height: 20px;
    padding: 0 4px;
    text-align: left;
    font-weight: normal;
    color: #5a4a10;
    border-right: 1px solid var(--line);
    border-bottom: 1px solid #cfc9ac;
    background: linear-gradient(#fbf9ec, #ebe5c8);
  }
  .members .num {
    width: 41px;
  }
  .members td {
    height: 18px;
    padding: 0 4px;
    border-right: 1px solid #cfcfd6;
    border-bottom: 1px solid #cfcfd6;
    white-space: nowrap;
  }
  .members td:first-child {
    text-align: right;
  }
  .members th:last-child,
  .members td:last-child {
    border-right: 0;
  }
  .order {
    width: 604px;
    flex: none;
    display: grid;
    grid-template-columns: 159px 91px 1fr;
    grid-template-rows: 27px 22px 20px 19px 18px;
    align-items: start;
    line-height: 19px;
  }
  .orderline {
    grid-column: 2 / 4;
    display: flex;
    gap: 6px;
  }
  .orderline > .field {
    width: 76px;
  }
  .orderline > .short {
    width: 80px;
    margin-left: 3px;
  }
  .chair {
    grid-row: 2;
  }
  .sub {
    grid-column: 2;
    text-align: center;
  }

  .vscroll {
    width: 15px;
    flex: none;
    display: flex;
    flex-direction: column;
    border-left: 1px solid #c3bc98;
    background: #fbf9ec;
  }
  .vscroll button,
  .hscroll button {
    display: flex;
    align-items: center;
    justify-content: center;
    background: #f6f2dc;
  }
  .vscroll button {
    height: 20px;
  }
  .thumb {
    display: flex;
    align-items: center;
    justify-content: center;
    border: 0 solid #c3bc98;
    box-sizing: border-box;
  }
  .thumb::after {
    content: "";
    width: 3px;
    height: 3px;
    border: 1px solid #bdb79c;
    border-width: 1px 0 0 1px;
  }
  .vscroll .thumb {
    height: 20px;
    border-width: 1px 0;
    background: linear-gradient(90deg, #f9f6e6, #e5dfc0);
  }
  .vscroll .long {
    height: 93px;
  }
  .track {
    flex: 1;
  }
  .vscroll .track {
    border-bottom: 1px solid #c3bc98;
  }
  .hscroll {
    display: flex;
    height: 15px;
    border-top: 1px solid #c3bc98;
    background: #fbf9ec;
  }
  .hscroll button {
    width: 20px;
  }
  .hscroll .thumb {
    flex: 13.6;
    border-width: 0 1px;
    background: linear-gradient(#f9f6e6, #e5dfc0);
  }
  .hscroll .track {
    border-right: 1px solid #c3bc98;
  }
  .corner {
    border: 1px solid #c3bc98;
    border-width: 1px 0 0 1px;
  }
  .tri {
    border: 4px solid transparent;
    --tri: #6f6c5c;
  }
  .dim {
    --tri: #c6c2ae;
  }
  .up {
    border-top: 0;
    border-bottom: 8px solid var(--tri);
  }
  .down {
    border-bottom: 0;
    border-top: 8px solid var(--tri);
  }
  .left {
    border-left: 0;
    border-right: 8px solid var(--tri);
  }
  .right {
    border-right: 0;
    border-left: 8px solid var(--tri);
  }

  .sheet {
    flex: 1;
    min-height: 0;
    margin-top: 12px;
    display: grid;
    grid-template: minmax(0, 1fr) 16px / minmax(0, 1fr) 16px;
    border: 1px solid var(--line);
    background: #fff;
    color: #000;
  }
  .paper {
    overflow: hidden;
  }
  .signs {
    display: grid;
    grid-template-columns: 158px 158px 158px;
    column-gap: 95px;
    margin-left: 272px;
    height: 20px;
    font-size: 9px;
    line-height: 12px;
    text-align: center;
  }
  .signs span:nth-child(2) {
    padding-left: 38px;
  }
  .dateline {
    display: grid;
    grid-template-columns: 61px 142px 39px 20px;
    margin-left: 30px;
    height: 14px;
  }
  .pagebreak {
    height: 1px;
    background: repeating-linear-gradient(90deg, #000 0 5px, transparent 5px 7px);
  }
  .report {
    width: 1077px;
    table-layout: fixed;
    border-collapse: collapse;
    margin-top: -1px;
  }
  .report th,
  .report td {
    padding: 0;
    border: 1px solid #000;
  }
  .report th {
    font-weight: normal;
    line-height: 14px;
  }
  .report tr:first-child th {
    border-top: 0;
  }
  .report .first {
    border-left: 0;
  }
  .h1 {
    height: 21px;
  }
  .h2 {
    height: 29px;
  }
  .h3 {
    height: 14px;
  }
  .h3 th {
    line-height: 13px;
  }
  .report tbody tr {
    height: 24px;
  }
  .report tbody .tall {
    height: 36px;
  }
  .report tbody tr:first-child td {
    border-top: 1px solid #000;
  }
  .report td {
    padding: 0 2px;
    vertical-align: top;
    font-size: 9px;
    line-height: 11px;
    white-space: pre;
  }
  .report .r {
    text-align: right;
  }
  .report .c {
    text-align: center;
  }

  .progress {
    flex: none;
    height: 13px;
    margin-top: 2px;
    border: 1px solid #cf9a4c;
    border-radius: 3px;
    background: linear-gradient(#f4c87e, #e3a244);
    text-align: center;
    line-height: 13px;
    color: #9a5a14;
  }

  .windows {
    flex: none;
    height: 24px;
    display: flex;
    align-items: center;
    border-top: 1px solid #fff;
    background: #f4f0e0;
  }
  .windows button {
    width: 172px;
    height: 20px;
    display: flex;
    align-items: center;
    gap: 1px;
    padding-left: 2px;
    border: 1px solid #a9a99f;
    background: #b1c8e2;
    color: #26323c;
  }
  .status {
    flex: none;
    height: 19px;
    display: flex;
    gap: 6px;
    background: var(--cream);
    border-bottom: 1px solid #1c2c54;
  }
  .status span {
    box-sizing: border-box;
    border: 1px solid #dcd6bc;
    padding: 0 2px 0 3px;
    line-height: 18px;
  }
  .hint {
    flex: 1;
  }
  .status .cap {
    width: 19px;
    padding: 0 0 0 1px;
    border-right: 0;
    overflow: hidden;
    font-size: 12px;
    color: #a09672;
  }

  .taskbar {
    flex: none;
    height: 34px;
    display: flex;
    gap: 4px;
    overflow: hidden;
    background: linear-gradient(90deg, #1b1c5c 0, #231f78 8%, #231f78 30%, #1f3480 36%, #1d4180 42%, #1c4f9a 55%, #042e62 57%, #042e62 58%, #1a5cae 59%, #2f68b8 64%, #356cbc 80%, #2b60ae 87%, #28508a 91%, #0f2a58 97%);
  }
  .taskbar button {
    width: 58px;
    height: 34px;
    flex: none;
    box-sizing: border-box;
  }
  .taskbar button svg {
    width: 58px;
    height: 34px;
  }
  .taskbar .start {
    width: 56px;
  }
  .taskbar .active,
  .taskbar .run,
  .taskbar .hot {
    box-shadow: inset 1px 1px #a6aed0, inset -1px 0 #8790bc;
    background: linear-gradient(135deg, #868cb6, #3c4486 60%, #2c3478);
  }
  .taskbar .active {
    background: linear-gradient(90deg, #a9a6c8, #c5b8c8 50%, #8c8ab8);
  }
  .taskbar .hot {
    background: linear-gradient(135deg, #f4e2a0, #eaa83a 60%, #c87c1c);
  }
  .tray {
    margin-left: auto;
    display: flex;
    align-items: center;
    gap: 9px;
    color: #fff;
    font: 12px/14px "DejaVu Sans Condensed", "DejaVu Sans", sans-serif;
  }
  .tray svg {
    width: 16px;
    height: 16px;
  }
  .tray .langbar {
    width: 10px;
    height: 20px;
  }
  .tray .small {
    width: 10px;
  }
  .clock {
    align-self: flex-start;
    width: 32px;
    margin-left: 7px;
    padding-top: 5px;
    display: flex;
    flex-direction: column;
    align-items: flex-end;
    gap: 3px;
    white-space: nowrap;
    font-size: 11px;
  }
</style>
